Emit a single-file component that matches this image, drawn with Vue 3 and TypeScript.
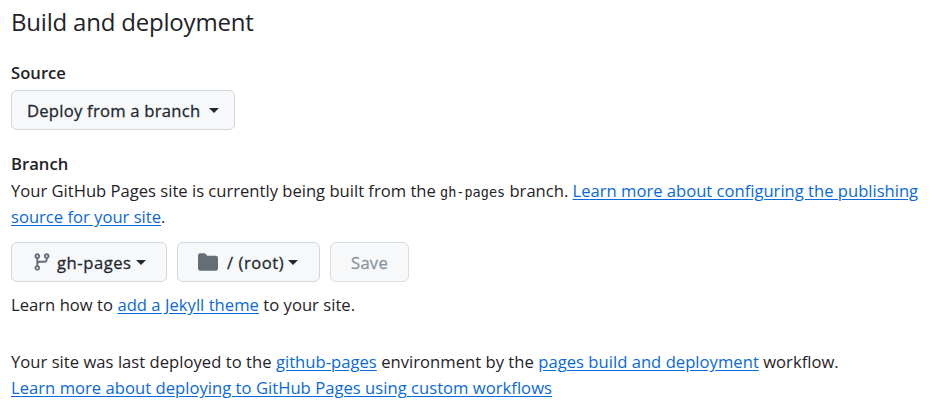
<script setup lang="ts">
const title: string = 'Build and deployment'
</script>

<template>
  <main class="page">
    <h2 class="title">{{ title }}</h2>
    <div class="label source-label">Source</div>
    <button class="btn source-btn">Deploy from a branch<span class="caret caret-wide"></span></button>
    <div class="label branch-label">Branch</div>
    <p class="text intro">Your GitHub Pages site is currently being built from the <code>gh-pages</code> branch. <a href="#">Learn more about configuring the publishing source for your site</a>.</p>
    <div class="actions">
      <button class="btn branch-btn">
        <svg class="icon" width="20" height="20" viewBox="0 0 16 16" fill="#656d76"><path d="M9.5 3.25a2.25 2.25 0 1 1 3 2.122V6A2.5 2.5 0 0 1 10 8.5H6a1 1 0 0 0-1 1v1.128a2.251 2.251 0 1 1-1.5 0V5.372a2.25 2.25 0 1 1 1.5 0v1.836A2.493 2.493 0 0 1 6 7h4a1 1 0 0 0 1-1v-.628A2.25 2.25 0 0 1 9.5 3.25Zm-6 0a.75.75 0 1 0 1.5 0 .75.75 0 0 0-1.5 0Zm8.25-.75a.75.75 0 1 0 0 1.5.75.75 0 0 0 0-1.5ZM4.25 12a.75.75 0 1 0 0 1.5.75.75 0 0 0 0-1.5Z"/></svg>
        gh-pages<span class="caret"></span>
      </button>
      <button class="btn folder-btn">
        <svg class="icon" width="20" height="20" viewBox="0 0 16 16" fill="#656d76"><path d="M1.75 1A1.75 1.75 0 0 0 0 2.75v10.5C0 14.216.784 15 1.75 15h12.5A1.75 1.75 0 0 0 16 13.25v-8.5A1.75 1.75 0 0 0 14.25 3H7.5a.25.25 0 0 1-.2-.1l-.9-1.2C6.07 1.26 5.55 1 5 1H1.75Z"/></svg>
        / (root)<span class="caret"></span>
      </button>
      <button class="btn save" disabled>Save</button>
    </div>
    <p class="text theme">Learn how to <a href="#">add a Jekyll theme</a> to your site.</p>
    <p class="text deployed">Your site was last deployed to the <a href="#">github-pages</a> environment by the <a href="#">pages build and deployment</a> workflow.<br><a href="#">Learn more about deploying to GitHub Pages using custom workflows</a></p>
  </main>
</template>

<style>
html, body { margin: 0; background: #fff; }
</style>

<style scoped>
.page {
  width: 934px;
  height: 410px;
  box-sizing: border-box;
  padding: 0 11px;
  overflow: hidden;
  font-family: "Open Sans", "Liberation Sans", sans-serif;
  font-size: 16.6px;
  letter-spacing: 0.03px;
  color: #1f2328;
}
.title {
  margin: 6px 0 0;
  font-size: 24px;
  line-height: 32px;
  font-weight: 400;
  letter-spacing: -0.2px;
}
.label { font-weight: 600; line-height: 24px; }
.source-label { margin-top: 23px; }
.branch-label { margin-top: 22px; }
.btn {
  display: inline-flex;
  align-items: center;
  height: 40px;
  box-sizing: border-box;
  border: 1px solid #d0d7de;
  border-radius: 6px;
  background: #f6f8fa;
  color: #24292f;
  font: inherit;
  font-weight: 500;
  letter-spacing: 0.25px;
  -webkit-text-stroke: 0.3px currentColor;
  padding: 0;
  white-space: nowrap;
}
.source-btn { margin-top: 5px; width: 224px; padding-left: 15px; }
.branch-btn, .folder-btn { letter-spacing: 0.55px; }
.caret {
  width: 0;
  height: 0;
  margin-left: 4px;
  border-top: 5px solid currentColor;
  border-left: 5px solid transparent;
  border-right: 5px solid transparent;
}
.caret-wide { margin-left: 9px; }
.text { margin: 0; line-height: 26px; }
.intro { margin-top: 2px; letter-spacing: 0; }
code {
  font-family: "DejaVu Sans Mono", "Liberation Mono", monospace;
  font-size: 13.5px;
  line-height: 0;
  letter-spacing: 0;
}
a { color: #0969da; text-decoration: underline; text-underline-offset: 2px; }
.actions { display: flex; gap: 10px; margin-top: 12px; }
.branch-btn { width: 156px; padding-left: 20px; }
.folder-btn { width: 143px; padding-left: 20px; }
.icon { margin-right: 5px; flex: none; }
.folder-btn .icon { margin-right: 9px; }
.save {
  width: 79px;
  justify-content: center;
  color: #8c959f;
  border-color: #d8dee4;
}
.theme { margin-top: 10px; }
.deployed { margin-top: 31px; }
</style>
